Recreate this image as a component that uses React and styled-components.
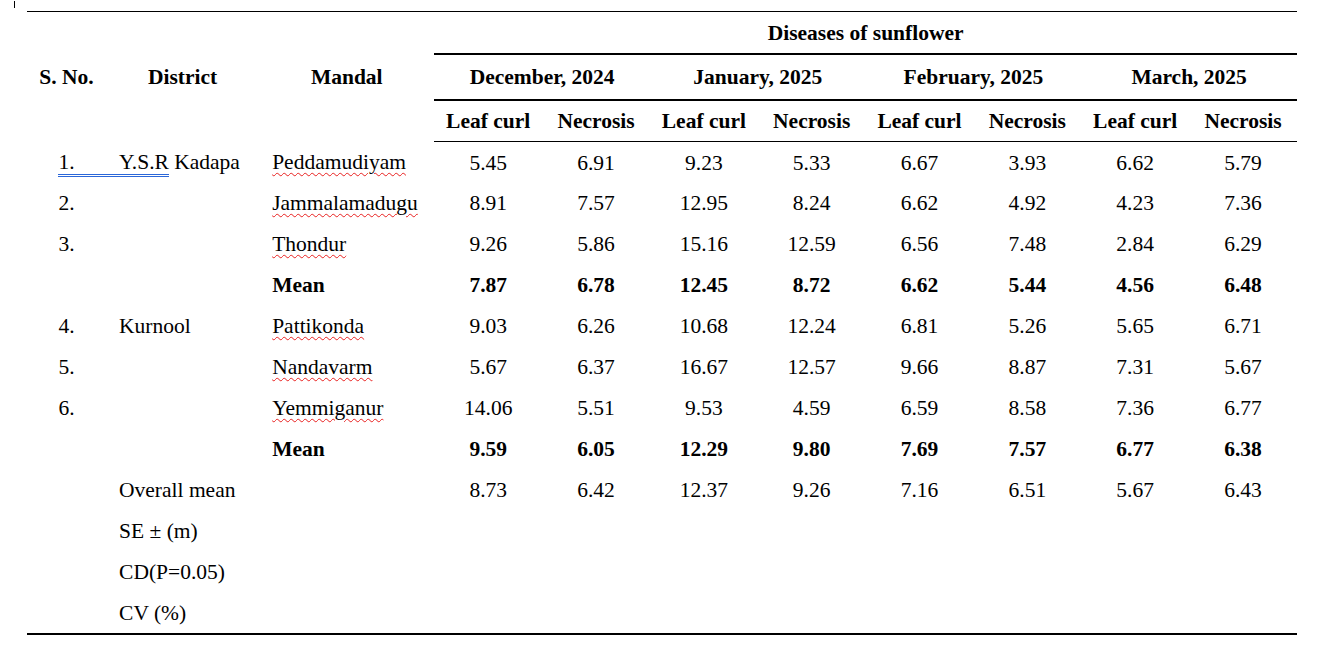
import React from "react";
import styled, { createGlobalStyle } from "styled-components";

const GlobalStyle = createGlobalStyle`
  html, body {
    margin: 0;
    padding: 0;
    background: #ffffff;
  }
  body {
    font-family: "Liberation Serif", "Times New Roman", serif;
    color: #000000;
  }
`;

const months = ["December, 2024", "January, 2025", "February, 2025", "March, 2025"];

const rows = [
  { no: "1.", district: "Y.S.R Kadapa", mandal: "Peddamudiyam", values: ["5.45", "6.91", "9.23", "5.33", "6.67", "3.93", "6.62", "5.79"] },
  { no: "2.", mandal: "Jammalamadugu", values: ["8.91", "7.57", "12.95", "8.24", "6.62", "4.92", "4.23", "7.36"] },
  { no: "3.", mandal: "Thondur", values: ["9.26", "5.86", "15.16", "12.59", "6.56", "7.48", "2.84", "6.29"] },
  { mean: true, mandal: "Mean", values: ["7.87", "6.78", "12.45", "8.72", "6.62", "5.44", "4.56", "6.48"] },
  { no: "4.", district: "Kurnool", mandal: "Pattikonda", values: ["9.03", "6.26", "10.68", "12.24", "6.81", "5.26", "5.65", "6.71"] },
  { no: "5.", mandal: "Nandavarm", values: ["5.67", "6.37", "16.67", "12.57", "9.66", "8.87", "7.31", "5.67"] },
  { no: "6.", mandal: "Yemmiganur", values: ["14.06", "5.51", "9.53", "4.59", "6.59", "8.58", "7.36", "6.77"] },
  { mean: true, mandal: "Mean", values: ["9.59", "6.05", "12.29", "9.80", "7.69", "7.57", "6.77", "6.38"] },
  { district: "Overall mean", values: ["8.73", "6.42", "12.37", "9.26", "7.16", "6.51", "5.67", "6.43"] },
  { district: "SE ± (m)", values: [] },
  { district: "CD(P=0.05)", values: [] },
  { district: "CV (%)", values: [] },
];

export default function App() {
  return (
    <Page>
      <GlobalStyle />
      <Cursor />
      <Table>
        <colgroup>
          <col style={{ width: 79 }} />
          <col style={{ width: 153 }} />
          <col style={{ width: 175 }} />
          {Array.from({ length: 8 }).map((_, i) => (
            <col key={i} style={{ width: 107.75 }} />
          ))}
        </colgroup>
        <thead>
          <HeadRow $height={42} $top>
            <HeadCell rowSpan={3}>S. No.</HeadCell>
            <HeadCell rowSpan={3}>District</HeadCell>
            <HeadCell rowSpan={3}>Mandal</HeadCell>
            <HeadCell colSpan={8} $ruled>
              Diseases of sunflower
            </HeadCell>
          </HeadRow>
          <HeadRow $height={46}>
            {months.map((m) => (
              <HeadCell key={m} colSpan={2} $ruled>
                {m}
              </HeadCell>
            ))}
          </HeadRow>
          <HeadRow $height={42}>
            {months.map((m) => (
              <React.Fragment key={m}>
                <HeadCell>Leaf curl</HeadCell>
                <HeadCell>Necrosis</HeadCell>
              </React.Fragment>
            ))}
          </HeadRow>
        </thead>
        <tbody>
          {rows.map((row, i) => (
            <BodyRow key={i} $bold={row.mean} $last={i === rows.length - 1}>
              <NoCell>
                {row.no === "1." ? <Flagged $trail>{row.no}</Flagged> : row.no}
              </NoCell>
              <TextCell>
                {row.no === "1." ? (
                  <>
                    <Flagged $lead>Y.S.R</Flagged> Kadapa
                  </>
                ) : (
                  row.district
                )}
              </TextCell>
              <TextCell>
                {row.mandal && (row.mean ? row.mandal : <Misspelled>{row.mandal}</Misspelled>)}
              </TextCell>
              {Array.from({ length: 8 }).map((_, j) => (
                <NumCell key={j}>{row.values[j] || ""}</NumCell>
              ))}
            </BodyRow>
          ))}
        </tbody>
      </Table>
    </Page>
  );
}

const Page = styled.div`
  position: relative;
  padding: 11px 0 0 27px;
  width: 1324px;
  height: 654px;
  box-sizing: border-box;
`;

const Cursor = styled.div`
  position: absolute;
  left: 14px;
  top: 1px;
  width: 1px;
  height: 7px;
  background: #000;
`;

const Table = styled.table`
  border-collapse: collapse;
  table-layout: fixed;
  width: 1270px;
  font-family: "Liberation Serif", "Times New Roman", serif;
  font-size: 21.5px;
  line-height: 1;
  color: #000;
`;

const HeadRow = styled.tr`
  height: ${(p) => p.$height}px;
  border-top: ${(p) => (p.$top ? "1px solid #000" : "none")};
`;

const HeadCell = styled.th`
  padding: 2px 0 0;
  font-family: "Liberation Serif", "Times New Roman", serif;
  font-weight: bold;
  text-align: center;
  vertical-align: middle;
  white-space: nowrap;
  border-bottom: ${(p) => (p.$ruled ? "2px solid #000" : "none")};

  tr:last-child > & {
    border-bottom: 1px solid #000;
  }
`;

const BodyRow = styled.tr`
  height: 41px;
  font-weight: ${(p) => (p.$bold ? "bold" : "normal")};
  border-bottom: ${(p) => (p.$last ? "2px solid #000" : "none")};
`;

const NoCell = styled.td`
  padding: 2px 0 0;
  font-family: "Liberation Serif", "Times New Roman", serif;
  text-align: center;
  vertical-align: middle;
  white-space: nowrap;
`;

const TextCell = styled.td`
  padding: 2px 0 0 13px;
  font-family: "Liberation Serif", "Times New Roman", serif;
  text-align: left;
  vertical-align: middle;
  white-space: nowrap;
`;

const NumCell = styled.td`
  padding: 2px 0 0;
  font-family: "Liberation Serif", "Times New Roman", serif;
  text-align: center;
  vertical-align: middle;
`;

const Flagged = styled.span`
  border-bottom: 3px double #2b67d9;
  ${(p) => p.$trail && "padding-right: 32px; margin-right: -32px;"}
  ${(p) => p.$lead && "padding-left: 13px; margin-left: -13px;"}
`;

const Misspelled = styled.span`
  text-decoration: underline wavy #e8201f;
  text-decoration-thickness: 1px;
  text-underline-offset: 3px;
`;
